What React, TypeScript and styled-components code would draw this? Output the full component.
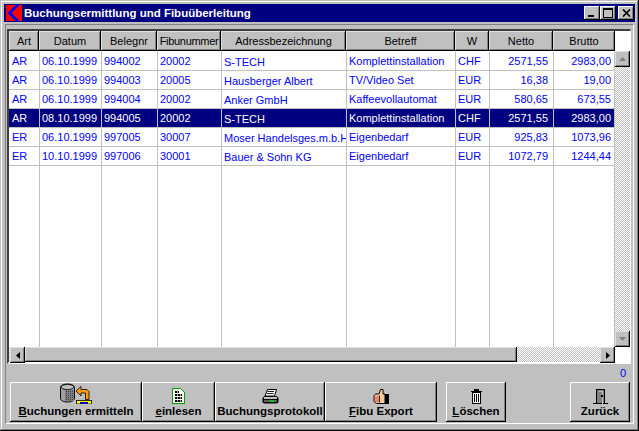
import styled, { createGlobalStyle } from "styled-components";

const GlobalStyle = createGlobalStyle`
	html, body {
		margin: 0;
		padding: 0;
		background: #c0c0c0;
	}

	body {
		font-family: "Liberation Sans", Arial, sans-serif;
		font-size: 11px;
	}
`;

const HEADER_COLUMNS = "30px 62px 56px 64px 125px 109px 34px 64px 62px";
const ROW_COLUMNS = "31px 62px 56px 64px 125px 109px 34px 64px 61px";
const DITHER = "repeating-conic-gradient(#c0c0c0 0 25%, #ffffff 0 50%) 0 0 / 2px 2px";

const Window = styled.div`
	width: 639px;
	height: 431px;
	box-sizing: border-box;
	background: #c0c0c0;
	padding: 4px;
	display: flex;
	flex-direction: column;
	overflow: hidden;
	box-shadow: inset -1px -1px 0 #000000, inset 1px 1px 0 #c0c0c0, inset -2px -2px 0 #808080, inset 2px 2px 0 #ffffff;
`;

const TitleBar = styled.div`
	height: 18px;
	flex: none;
	background: #000080;
	display: flex;
	align-items: center;
	padding: 0 1px 0 2px;
`;

const TitleText = styled.span`
	color: #ffffff;
	font-weight: bold;
	font-size: 11.5px;
	margin-left: 2px;
	flex: 1;
`;

const CaptionButton = styled.div<{ $gap?: number }>`
	width: 16px;
	height: 14px;
	margin-left: ${(p) => p.$gap ?? 0}px;
	background: #c0c0c0;
	box-sizing: border-box;
	box-shadow: inset -1px -1px 0 #000000, inset 1px 1px 0 #ffffff, inset -2px -2px 0 #808080;
	display: flex;
	align-items: center;
	justify-content: center;
`;

const Panel = styled.div`
	flex: 1;
	margin: 2px 1px 3px 1px;
	padding: 4px 2px 0 1px;
	border: 1px solid;
	border-color: #808080 #ffffff #ffffff #808080;
	display: flex;
	flex-direction: column;
	min-height: 0;
`;

const GridFrame = styled.div`
	width: 624px;
	height: 335px;
	flex: none;
	box-sizing: border-box;
	border-style: solid;
	border-width: 2px 1px 2px 2px;
	border-color: #404040 #ffffff #ffffff #404040;
	background: #ffffff;
	display: flex;
	flex-direction: column;
`;

const GridMain = styled.div`
	height: 316px;
	flex: none;
	display: flex;
`;

const Table = styled.div`
	width: 606px;
	display: flex;
	flex-direction: column;
	background: #ffffff;
`;

const HeaderRow = styled.div`
	height: 20px;
	flex: none;
	margin-bottom: 1px;
	display: grid;
	grid-template-columns: ${HEADER_COLUMNS};
`;

const HeaderCell = styled.div<{ $tight?: boolean }>`
	background: #c0c0c0;
	color: #000000;
	font-size: 11px;
	letter-spacing: ${(p) => (p.$tight ? "-0.3px" : "0")};
	white-space: nowrap;
	overflow: hidden;
	display: flex;
	align-items: center;
	justify-content: center;
	box-shadow: inset -1px -1px 0 #000000, inset 1px 1px 0 #dfdfdf, inset -2px -2px 0 #808080;
`;

const Row = styled.div<{ $selected?: boolean }>`
	height: 19px;
	flex: none;
	display: grid;
	grid-template-columns: ${ROW_COLUMNS};
	background: ${(p) => (p.$selected ? "#000080" : "#ffffff")};
	color: ${(p) => (p.$selected ? "#ffffff" : "#0000ff")};
`;

const Cell = styled.div<{ $right?: number; $low?: boolean; $first?: boolean }>`
	box-sizing: border-box;
	border-right: 1px solid #c0c0c0;
	border-bottom: 1px solid #c0c0c0;
	padding: ${(p) => (p.$low ? "2px" : "1px")} ${(p) => p.$right ?? 1}px 0 ${(p) => (p.$first ? 3 : 2)}px;
	font-size: 11px;
	line-height: 16px;
	white-space: nowrap;
	overflow: hidden;
	text-align: ${(p) => (p.$right ? "right" : "left")};
`;

const FillerRow = styled.div`
	flex: 1;
	display: grid;
	grid-template-columns: ${ROW_COLUMNS};
`;

const FillerCell = styled.div`
	border-right: 1px solid #c0c0c0;
`;

const VScroll = styled.div`
	width: 15px;
	display: flex;
	flex-direction: column;
`;

const CornerBlank = styled.div`
	height: 20px;
	flex: none;
	background: #ffffff;
`;

const ScrollTrack = styled.div`
	flex: 1;
	background: ${DITHER};
`;

const ScrollButton = styled.div`
	width: 15px;
	height: 16px;
	flex: none;
	box-sizing: border-box;
	background: #c0c0c0;
	box-shadow: inset -1px -1px 0 #000000, inset 1px 1px 0 #dfdfdf, inset -2px -2px 0 #808080;
	display: flex;
	align-items: center;
	justify-content: center;
`;

const HScrollRow = styled.div`
	height: 15px;
	flex: none;
	display: flex;
	background: #ffffff;
`;

const HScroll = styled.div`
	width: 606px;
	display: flex;
	padding-left: 1px;
	box-sizing: border-box;
	background: ${DITHER};
`;

const HThumb = styled.div`
	width: 492px;
	flex: none;
	background: #c0c0c0;
	box-shadow: inset -1px -1px 0 #000000, inset 1px 1px 0 #dfdfdf, inset -2px -2px 0 #808080;
`;

const HFill = styled.div`
	flex: 1;
`;

const StatusRow = styled.div`
	height: 18px;
	flex: none;
	width: 624px;
	box-sizing: border-box;
	color: #0000ff;
	font-size: 11px;
	line-height: 18px;
	text-align: right;
	padding-right: 5px;
`;

const ButtonRow = styled.div`
	display: flex;
	padding-left: 3px;
`;

const ActionButton = styled.div<{ $width: number; $gap?: number }>`
	width: ${(p) => p.$width}px;
	height: 40px;
	margin-left: ${(p) => p.$gap ?? 0}px;
	flex: none;
	box-sizing: border-box;
	background: #c0c0c0;
	box-shadow: inset -1px -1px 0 #000000, inset 1px 1px 0 #ffffff, inset -2px -2px 0 #808080;
	display: flex;
	flex-direction: column;
	align-items: center;
	overflow: hidden;
	padding-top: 1px;
`;

const IconSlot = styled.div`
	height: 21px;
	flex: none;
	display: flex;
	align-items: flex-end;
	justify-content: center;
`;

const ButtonLabel = styled.span`
	font-weight: bold;
	font-size: 11.5px;
	line-height: 14px;
	color: #000000;
	white-space: nowrap;
`;

type Booking = {
	art: string;
	datum: string;
	beleg: string;
	fibu: string;
	adresse: string;
	betreff: string;
	w: string;
	netto: string;
	brutto: string;
	selected?: boolean;
};

const HEADERS = ["Art", "Datum", "Belegnr", "Fibunummer", "Adressbezeichnung", "Betreff", "W", "Netto", "Brutto"];

const BOOKINGS: Booking[] = [
	{ art: "AR", datum: "06.10.1999", beleg: "994002", fibu: "20002", adresse: "S-TECH", betreff: "Komplettinstallation", w: "CHF", netto: "2571,55", brutto: "2983,00" },
	{ art: "AR", datum: "06.10.1999", beleg: "994003", fibu: "20005", adresse: "Hausberger Albert", betreff: "TV/Video Set", w: "EUR", netto: "16,38", brutto: "19,00" },
	{ art: "AR", datum: "06.10.1999", beleg: "994004", fibu: "20002", adresse: "Anker GmbH", betreff: "Kaffeevollautomat", w: "EUR", netto: "580,65", brutto: "673,55" },
	{ art: "AR", datum: "08.10.1999", beleg: "994005", fibu: "20002", adresse: "S-TECH", betreff: "Komplettinstallation", w: "CHF", netto: "2571,55", brutto: "2983,00", selected: true },
	{ art: "ER", datum: "06.10.1999", beleg: "997005", fibu: "30007", adresse: "Moser Handelsges.m.b.H", betreff: "Eigenbedarf", w: "EUR", netto: "925,83", brutto: "1073,96" },
	{ art: "ER", datum: "10.10.1999", beleg: "997006", fibu: "30001", adresse: "Bauer & Sohn KG", betreff: "Eigenbedarf", w: "EUR", netto: "1072,79", brutto: "1244,44" },
];

function AppLogo() {
	return (
		<svg width="16" height="16" viewBox="0 0 16 16" shapeRendering="crispEdges">
			<rect width="16" height="16" fill="#ff0000" />
			<polygon points="9,0 2,8 9,16 13,16 6,8 13,0" fill="#0000ff" />
		</svg>
	);
}

function MinIcon() {
	return (
		<svg width="8" height="8" viewBox="0 0 8 8" shapeRendering="crispEdges">
			<rect x="0" y="6" width="6" height="2" fill="#000" />
		</svg>
	);
}

function MaxIcon() {
	return (
		<svg width="10" height="10" viewBox="0 0 10 10" shapeRendering="crispEdges">
			<path d="M0 0h10v10h-10zM1 2v7h8v-7z" fill="#000" fillRule="evenodd" />
		</svg>
	);
}

function CloseIcon() {
	return (
		<svg width="9" height="8" viewBox="0 0 9 8">
			<path d="M1 0.5l7 7M8 0.5l-7 7" stroke="#000" strokeWidth="1.6" />
		</svg>
	);
}

function Arrow({ dir, color }: { dir: "up" | "down" | "left" | "right"; color: string }) {
	const points = {
		up: "3.5,0 7,4 0,4",
		down: "0,0 7,0 3.5,4",
		left: "4,0 4,7 0,3.5",
		right: "0,0 4,3.5 0,7",
	}[dir];
	const size = dir === "up" || dir === "down" ? { w: 7, h: 4 } : { w: 4, h: 7 };
	return (
		<svg width={size.w} height={size.h} viewBox={`0 0 ${size.w} ${size.h}`}>
			<polygon points={points} fill={color} />
		</svg>
	);
}

function DatabaseIcon() {
	return (
		<svg width="32" height="21" viewBox="0 0 32 21">
			<defs>
				<pattern id="dbDots" width="2" height="2" patternUnits="userSpaceOnUse">
					<rect width="2" height="2" fill="#808080" />
					<rect width="1" height="1" fill="#404040" />
				</pattern>
			</defs>
			<path d="M0.5 4.5c0-2 3-3.5 7-3.5s7 1.5 7 3.5v11c0 2-3 3.5-7 3.5s-7-1.5-7-3.5z" fill="#a0a0a0" stroke="#000" />
			<ellipse cx="7.5" cy="4" rx="6.5" ry="2.5" fill="#c0c0c0" stroke="#000" strokeWidth="0.8" />
			<rect x="5" y="7" width="9" height="11" fill="url(#dbDots)" />
			<path d="M16 8l5-4.500v3h6l2 2v8h-3.500v-6.500H21v3z" fill="#ff9900" stroke="#000" strokeWidth="0.8" />
			<rect x="16.500" y="17.500" width="15" height="3.500" fill="#ffff00" stroke="#000" strokeWidth="0.8" />
			<rect x="20" y="19" width="8" height="2" fill="#0000c0" />
		</svg>
	);
}

function SheetIcon() {
	return (
		<svg width="13" height="16" viewBox="0 0 13 16" shapeRendering="crispEdges">
			<path d="M0.5 0.5h8l4 4v11h-12z" fill="#ffffff" stroke="#00a000" />
			<rect x="3" y="3" width="4" height="11" fill="#000" />
			<rect x="7" y="6" width="3" height="8" fill="#000" />
			<path d="M3 5.500h7M3 8.500h7M3 11.500h7" stroke="#ffffff" />
			<path d="M5.500 3v11M8 6v8" stroke="#ffffff" strokeWidth="0.6" />
		</svg>
	);
}

function PrinterIcon() {
	return (
		<svg width="17" height="15" viewBox="0 0 17 15" shapeRendering="geometricPrecision">
			<path d="M5.500 0.500h9l-2 6.500H3z" fill="#ffffff" stroke="#000" />
			<path d="M5.500 2.500h6.500M5 4.500h6.500" stroke="#000" strokeWidth="0.9" />
			<path d="M2.500 7h12l2 2v4.500l-2 1h-12l-2-1V9z" fill="#000" />
			<rect x="2" y="8" width="13" height="2" fill="#c0c0c0" />
			<rect x="2" y="11" width="13" height="2" fill="#606060" />
			<rect x="8" y="11" width="4" height="2" fill="#00d000" />
		</svg>
	);
}

function ThumbIcon() {
	return (
		<svg width="16" height="15" viewBox="0 0 16 15">
			<path d="M1 7.500C1 6 2 5 4 5h2l1.500-4.500h2.500L10 5h2v9.500H5c-2 0-4-1-4-3z" fill="#ffcc99" stroke="#000" />
			<path d="M1.500 8h5M1.500 10h5M2 12h4.500" stroke="#d04040" strokeWidth="1" />
			<path d="M6.500 6.500v7" stroke="#000" strokeWidth="0.8" />
			<rect x="12" y="5" width="4" height="10" fill="#000" />
		</svg>
	);
}

function TrashIcon() {
	return (
		<svg width="11" height="15" viewBox="0 0 11 15" shapeRendering="crispEdges">
			<path d="M0 2h11v1H0zM3 0h5v2H3z" fill="#000" />
			<path d="M1.500 3.500h8v11h-8z" fill="#ffffff" stroke="#000" />
			<path d="M3.500 5v8M5.500 5v8M7.500 5v8" stroke="#000" />
		</svg>
	);
}

function DoorIcon() {
	return (
		<svg width="15" height="15" viewBox="0 0 15 15" shapeRendering="crispEdges">
			<path d="M0 14.500h15" stroke="#000" />
			<path d="M3.500 0.500h8v14h-8z" fill="#808080" stroke="#000" />
			<path d="M5.500 2.500h4v12" fill="none" stroke="#c0c0c0" />
			<rect x="8" y="6" width="2" height="2" fill="#000" />
		</svg>
	);
}

export default function App() {
	return (
		<Window>
			<GlobalStyle />
			<TitleBar>
				<AppLogo />
				<TitleText>Buchungsermittlung und Fibuüberleitung</TitleText>
				<CaptionButton>
					<MinIcon />
				</CaptionButton>
				<CaptionButton>
					<MaxIcon />
				</CaptionButton>
				<CaptionButton $gap={2}>
					<CloseIcon />
				</CaptionButton>
			</TitleBar>
			<Panel>
				<GridFrame>
					<GridMain>
						<Table>
							<HeaderRow>
								{HEADERS.map((h) => (
									<HeaderCell key={h} $tight={h === "Fibunummer"}>
										{h}
									</HeaderCell>
								))}
							</HeaderRow>
							{BOOKINGS.map((b) => (
								<Row key={b.beleg} $selected={b.selected}>
									<Cell $first>{b.art}</Cell>
									<Cell>{b.datum}</Cell>
									<Cell>{b.beleg}</Cell>
									<Cell>{b.fibu}</Cell>
									<Cell $low>{b.adresse}</Cell>
									<Cell>{b.betreff}</Cell>
									<Cell>{b.w}</Cell>
									<Cell $right={5}>{b.netto}</Cell>
									<Cell $right={3}>{b.brutto}</Cell>
								</Row>
							))}
							<FillerRow>
								{HEADERS.map((h) => (
									<FillerCell key={h} />
								))}
							</FillerRow>
						</Table>
						<VScroll>
							<CornerBlank />
							<ScrollButton>
								<Arrow dir="up" color="#808080" />
							</ScrollButton>
							<ScrollTrack />
							<ScrollButton>
								<Arrow dir="down" color="#808080" />
							</ScrollButton>
						</VScroll>
					</GridMain>
					<HScrollRow>
						<HScroll>
							<ScrollButton>
								<Arrow dir="left" color="#000" />
							</ScrollButton>
							<HThumb />
							<HFill />
							<ScrollButton>
								<Arrow dir="right" color="#000" />
							</ScrollButton>
						</HScroll>
					</HScrollRow>
				</GridFrame>
				<StatusRow>0</StatusRow>
				<ButtonRow>
					<ActionButton $width={132}>
						<IconSlot>
							<DatabaseIcon />
						</IconSlot>
						<ButtonLabel>
							<u>B</u>uchungen ermitteln
						</ButtonLabel>
					</ActionButton>
					<ActionButton $width={73}>
						<IconSlot>
							<SheetIcon />
						</IconSlot>
						<ButtonLabel>
							<u>e</u>inlesen
						</ButtonLabel>
					</ActionButton>
					<ActionButton $width={110}>
						<IconSlot>
							<PrinterIcon />
						</IconSlot>
						<ButtonLabel>Buchungsprotokoll</ButtonLabel>
					</ActionButton>
					<ActionButton $width={112}>
						<IconSlot>
							<ThumbIcon />
						</IconSlot>
						<ButtonLabel>
							<u>F</u>ibu Export
						</ButtonLabel>
					</ActionButton>
					<ActionButton $width={60} $gap={9}>
						<IconSlot>
							<TrashIcon />
						</IconSlot>
						<ButtonLabel>
							<u>L</u>öschen
						</ButtonLabel>
					</ActionButton>
					<ActionButton $width={60} $gap={64}>
						<IconSlot>
							<DoorIcon />
						</IconSlot>
						<ButtonLabel>Zurück</ButtonLabel>
					</ActionButton>
				</ButtonRow>
			</Panel>
		</Window>
	);
}
